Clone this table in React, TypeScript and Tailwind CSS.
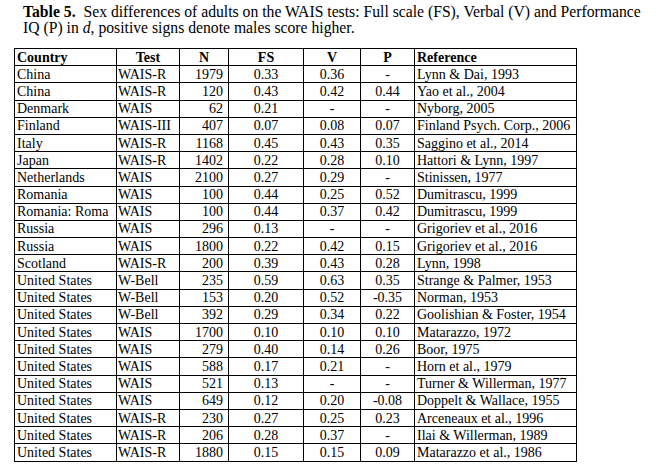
import React from 'react';

type Row = [string, string, string, string, string, string, string];

const ROWS: Row[] = [
  ['China', 'WAIS-R', '1979', '0.33', '0.36', '-', 'Lynn & Dai, 1993'],
  ['China', 'WAIS-R', '120', '0.43', '0.42', '0.44', 'Yao et al., 2004'],
  ['Denmark', 'WAIS', '62', '0.21', '-', '-', 'Nyborg, 2005'],
  ['Finland', 'WAIS-III', '407', '0.07', '0.08', '0.07', 'Finland Psych. Corp., 2006'],
  ['Italy', 'WAIS-R', '1168', '0.45', '0.43', '0.35', 'Saggino et al., 2014'],
  ['Japan', 'WAIS-R', '1402', '0.22', '0.28', '0.10', 'Hattori & Lynn, 1997'],
  ['Netherlands', 'WAIS', '2100', '0.27', '0.29', '-', 'Stinissen, 1977'],
  ['Romania', 'WAIS', '100', '0.44', '0.25', '0.52', 'Dumitrascu, 1999'],
  ['Romania: Roma', 'WAIS', '100', '0.44', '0.37', '0.42', 'Dumitrascu, 1999'],
  ['Russia', 'WAIS', '296', '0.13', '-', '-', 'Grigoriev et al., 2016'],
  ['Russia', 'WAIS', '1800', '0.22', '0.42', '0.15', 'Grigoriev et al., 2016'],
  ['Scotland', 'WAIS-R', '200', '0.39', '0.43', '0.28', 'Lynn, 1998'],
  ['United States', 'W-Bell', '235', '0.59', '0.63', '0.35', 'Strange & Palmer, 1953'],
  ['United States', 'W-Bell', '153', '0.20', '0.52', '-0.35', 'Norman, 1953'],
  ['United States', 'W-Bell', '392', '0.29', '0.34', '0.22', 'Goolishian & Foster, 1954'],
  ['United States', 'WAIS', '1700', '0.10', '0.10', '0.10', 'Matarazzo, 1972'],
  ['United States', 'WAIS', '279', '0.40', '0.14', '0.26', 'Boor, 1975'],
  ['United States', 'WAIS', '588', '0.17', '0.21', '-', 'Horn et al., 1979'],
  ['United States', 'WAIS', '521', '0.13', '-', '-', 'Turner & Willerman, 1977'],
  ['United States', 'WAIS', '649', '0.12', '0.20', '-0.08', 'Doppelt & Wallace, 1955'],
  ['United States', 'WAIS-R', '230', '0.27', '0.25', '0.23', 'Arceneaux et al., 1996'],
  ['United States', 'WAIS-R', '206', '0.28', '0.37', '-', 'Ilai & Willerman, 1989'],
  ['United States', 'WAIS-R', '1880', '0.15', '0.15', '0.09', 'Matarazzo et al., 1986'],
];

const cell = 'border border-black h-[17.2px] p-0 leading-[15px] whitespace-nowrap';

export default function App() {
  return (
    <div className="w-[667px] h-[475px] bg-white text-black font-['Liberation_Serif',serif] overflow-hidden">
      {/* Caption */}
      <p className="pl-[23px] pt-[4px] text-[15.7px] leading-[16px] whitespace-nowrap">
        <b>Table 5.</b>&nbsp; Sex differences of adults on the WAIS tests: Full scale (FS), Verbal (V) and Performance
        <br />
        IQ (P) in <i>d</i>, positive signs denote males score higher.
      </p>

      {/* Table */}
      <table className="ml-[14px] mt-[12px] border-collapse table-fixed text-[14px] w-[562px]">
        <colgroup>
          <col className="w-[102px]" />
          <col className="w-[63px]" />
          <col className="w-[49px]" />
          <col className="w-[75px]" />
          <col className="w-[57px]" />
          <col className="w-[54px]" />
          <col className="w-[162px]" />
        </colgroup>
        <thead>
          <tr className="font-bold">
            <td className={`${cell} text-left pl-[2px]`}>Country</td>
            <td className={`${cell} text-center`}>Test</td>
            <td className={`${cell} text-center`}>N</td>
            <td className={`${cell} text-center`}>FS</td>
            <td className={`${cell} text-center`}>V</td>
            <td className={`${cell} text-center`}>P</td>
            <td className={`${cell} text-left pl-[2px]`}>Reference</td>
          </tr>
        </thead>
        <tbody>
          {ROWS.map((r, i) => (
            <tr key={i}>
              <td className={`${cell} text-left pl-[2px]`}>{r[0]}</td>
              <td className={`${cell} text-left pl-[1px]`}>{r[1]}</td>
              <td className={`${cell} text-right pr-[5px]`}>{r[2]}</td>
              <td className={`${cell} text-center`}>{r[3]}</td>
              <td className={`${cell} text-center`}>{r[4]}</td>
              <td className={`${cell} text-center`}>{r[5]}</td>
              <td className={`${cell} text-left pl-[2px]`}>{r[6]}</td>
            </tr>
          ))}
        </tbody>
      </table>
    </div>
  );
}
